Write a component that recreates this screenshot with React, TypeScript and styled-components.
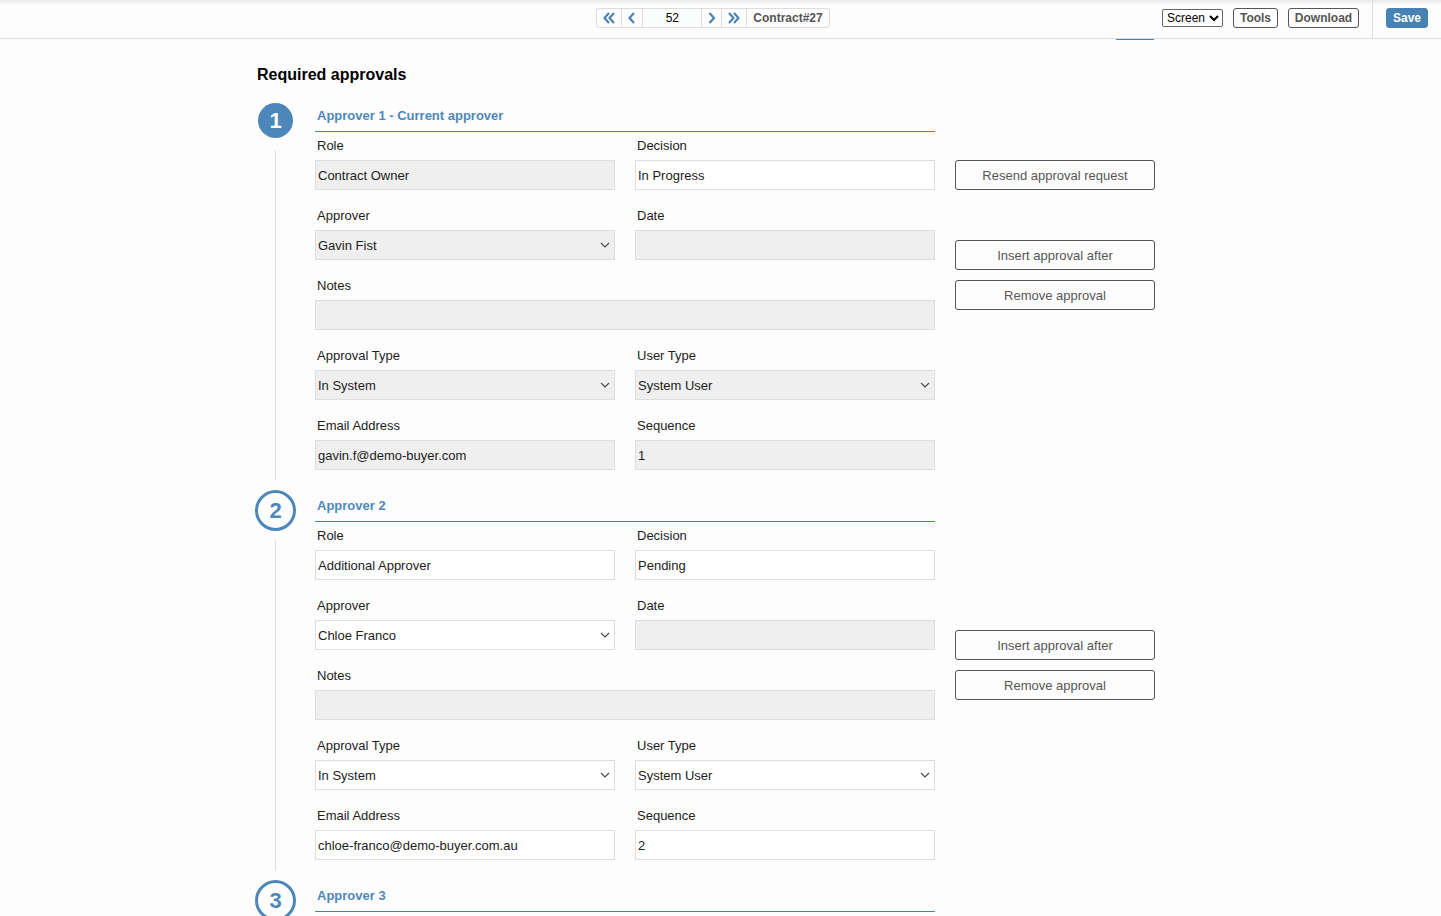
import React, { useId } from "react";
import styled, { createGlobalStyle, css } from "styled-components";

const blue = "#4682b4";
const softBlue = "#4d87ba";
const line = "#dddddd";
const ink = "#555555";

const GlobalStyle = createGlobalStyle`
  *, *::before, *::after { box-sizing: border-box; }
  body { margin: 0; background: #fdfdfd; }
  body, button, input, select {
    font-family: Arial, "Liberation Sans", sans-serif;
    font-size: 13px;
  }
`;

const Page = styled.div`
  display: flex;
  flex-direction: column;
  height: 100vh;
  overflow: hidden;
  color: #1c1c1c;
`;

const TopBar = styled.header`
  display: grid;
  grid-template-columns: 1fr auto 1fr;
  flex: none;
  height: 39px;
  border-bottom: 1px solid ${line};
  background: linear-gradient(#e8e8e8, #fdfdfd 5px);
`;

const Pager = styled.nav`
  grid-column: 2;
  display: flex;
  align-self: start;
  height: 20px;
  margin: 8px 15px 0 0;
  border: 1px solid ${line};
  border-radius: 3px;
`;

const PagerButton = styled.button<{ $width: number }>`
  display: flex;
  align-items: center;
  justify-content: center;
  width: ${(p) => p.$width}px;
  padding: 0;
  border: 0;
  border-right: 1px solid ${line};
  background: transparent;
  color: ${blue};
  cursor: pointer;
`;

const PageInput = styled.input`
  width: 59px;
  padding: 0;
  border: 0;
  border-right: 1px solid ${line};
  background: #fbfdfd;
  font-size: 12px;
  text-align: center;
  color: #000000;
`;

const PagerLabel = styled.span`
  padding: 0 6px;
  font-size: 12px;
  font-weight: bold;
  line-height: 18px;
  color: ${ink};
`;

const Actions = styled.div`
  display: flex;
  justify-content: flex-end;
  align-items: flex-start;
  gap: 10px;
  padding-right: 13px;
`;

const ScreenSelect = styled.select`
  width: 61px;
  height: 18px;
  margin-top: 9px;
  padding: 0;
  border: 1px solid #666666;
  border-radius: 2px;
  background: #ffffff;
  font-size: 12px;
  color: #000000;
`;

const BarButton = styled.button<{ $primary?: boolean; $width: number }>`
  width: ${(p) => p.$width}px;
  height: 20px;
  margin-top: 8px;
  padding: 0;
  border: 1px solid ${(p) => (p.$primary ? blue : ink)};
  border-radius: 3px;
  background: ${(p) => (p.$primary ? blue : "transparent")};
  color: ${(p) => (p.$primary ? "#ffffff" : ink)};
  font-size: 12px;
  font-weight: bold;
  line-height: 16px;
  cursor: pointer;
`;

const SaveArea = styled.div`
  height: 38px;
  margin-left: 3px;
  padding-left: 13px;
  border-left: 1px solid ${line};
`;

const Main = styled.main`
  flex: 1;
  min-height: 0;
  padding-right: 31px;
  overflow: hidden;
`;

const Content = styled.div`
  width: 100%;
  max-width: 900px;
  margin: 0 auto;
`;

const TabEdge = styled.div`
  width: 38px;
  height: 1px;
  margin: 0 1px 0 auto;
  background: ${blue};
`;

const Heading = styled.h1`
  height: 60px;
  margin: 0;
  padding: 25px 2px 0;
  font-size: 16px;
  line-height: 20px;
  color: #000000;
`;

const Section = styled.section`
  display: grid;
  grid-template-columns: 40px minmax(0, 620px) 200px;
  column-gap: 20px;
  min-height: 390px;
`;

const Rail = styled.div`
  display: flex;
  flex-direction: column;
  align-items: center;
  width: 41px;
`;

const BadgeSlot = styled.div`
  display: flex;
  align-items: center;
  justify-content: center;
  width: 41px;
  height: 41px;
  margin-bottom: 9px;
`;

const Badge = styled.div<{ $current: boolean }>`
  display: flex;
  align-items: center;
  justify-content: center;
  border-radius: 50%;
  font-size: 22px;
  font-weight: bold;
  line-height: 24px;
  ${(p) =>
    p.$current
      ? css`
          width: 35px;
          height: 35px;
          background: ${softBlue};
          color: #ffffff;
        `
      : css`
          width: 41px;
          height: 41px;
          border: 3px solid ${softBlue};
          color: ${softBlue};
        `}
`;

const RailLine = styled.div`
  flex: 1;
  width: 1px;
  margin-bottom: 10px;
  background: ${line};
`;

const SectionTitle = styled.h2`
  height: 32px;
  margin: 0;
  padding: 0 2px;
  border-bottom: 1px solid ${blue};
  font-size: 13px;
  line-height: 31px;
  color: ${softBlue};
`;

const Fields = styled.div`
  display: grid;
  grid-template-columns: 1fr 1fr;
  gap: 12px 20px;
`;

const FieldBox = styled.div<{ $wide?: boolean }>`
  display: flex;
  flex-direction: column;
  grid-column: ${(p) => (p.$wide ? "1 / -1" : "auto")};
`;

const Label = styled.label`
  height: 28px;
  padding: 0 2px;
  line-height: 28px;
`;

const control = css<{ $grey?: boolean }>`
  width: 100%;
  height: 30px;
  margin: 0;
  padding: 0 2px;
  border: 1px solid ${line};
  border-radius: 0;
  outline: none;
  background: ${(p) => (p.$grey ? "#efefef" : "#ffffff")};
  color: #1c1c1c;
`;

const TextInput = styled.input`
  ${control}
`;

const SelectWrap = styled.div`
  position: relative;
`;

const SelectInput = styled.select`
  ${control}
  display: block;
  appearance: none;
`;

const Chevron = styled.svg`
  position: absolute;
  top: 12px;
  right: 5px;
  pointer-events: none;
`;

const Side = styled.div`
  display: flex;
  flex-direction: column;
  gap: 10px;
  padding-top: 60px;
`;

const ResendSlot = styled.div`
  height: 70px;
`;

const SideButton = styled.button`
  width: 200px;
  height: 30px;
  padding: 0;
  border: 1px solid ${ink};
  border-radius: 3px;
  background: transparent;
  color: ${ink};
  cursor: pointer;
`;

type FieldData = {
  label: string;
  value: string;
  grey?: boolean;
  select?: boolean;
  wide?: boolean;
};

type Approver = {
  title: string;
  current?: boolean;
  resend?: boolean;
  fields: FieldData[];
};

const approvers: Approver[] = [
  {
    title: "Approver 1 - Current approver",
    current: true,
    resend: true,
    fields: [
      { label: "Role", value: "Contract Owner", grey: true },
      { label: "Decision", value: "In Progress" },
      { label: "Approver", value: "Gavin Fist", grey: true, select: true },
      { label: "Date", value: "", grey: true },
      { label: "Notes", value: "", grey: true, wide: true },
      { label: "Approval Type", value: "In System", grey: true, select: true },
      { label: "User Type", value: "System User", grey: true, select: true },
      { label: "Email Address", value: "gavin.f@demo-buyer.com", grey: true },
      { label: "Sequence", value: "1", grey: true },
    ],
  },
  {
    title: "Approver 2",
    fields: [
      { label: "Role", value: "Additional Approver" },
      { label: "Decision", value: "Pending" },
      { label: "Approver", value: "Chloe Franco", select: true },
      { label: "Date", value: "", grey: true },
      { label: "Notes", value: "", grey: true, wide: true },
      { label: "Approval Type", value: "In System", select: true },
      { label: "User Type", value: "System User", select: true },
      { label: "Email Address", value: "chloe-franco@demo-buyer.com.au" },
      { label: "Sequence", value: "2" },
    ],
  },
  { title: "Approver 3", fields: [] },
];

function Field({ label, value, grey, select, wide }: FieldData) {
  const id = useId();
  return (
    <FieldBox $wide={wide}>
      <Label htmlFor={id}>{label}</Label>
      {select ? (
        <SelectWrap>
          <SelectInput id={id} $grey={grey} defaultValue={value}>
            <option>{value}</option>
          </SelectInput>
          <Chevron width="10" height="6" viewBox="0 0 10 6" aria-hidden="true">
            <path d="M1 1l4 4 4-4" fill="none" stroke="#444444" strokeWidth="1.1" />
          </Chevron>
        </SelectWrap>
      ) : (
        <TextInput id={id} $grey={grey} readOnly={grey} defaultValue={value} />
      )}
    </FieldBox>
  );
}

function Arrow({ double, right }: { double?: boolean; right?: boolean }) {
  const shape = right
    ? double
      ? "M1 1l4.5 5L1 11M6 1l4.500 5L6 11"
      : "M1.500 1l4.500 5-4.500 5"
    : double
      ? "M6 1L1.500 6 6 11M11 1L6.500 6l4.500 5"
      : "M6 1L1.500 6 6 11";
  const width = double ? 12 : 8;
  return (
    <svg width={width} height="12" viewBox={`0 0 ${width} 12`} aria-hidden="true">
      <path d={shape} fill="none" stroke="currentColor" strokeWidth="2.1" />
    </svg>
  );
}

export default function App() {
  return (
    <Page>
      <GlobalStyle />
      <TopBar>
        <Pager aria-label="Records">
          <PagerButton $width={25} aria-label="First"><Arrow double /></PagerButton>
          <PagerButton $width={21} aria-label="Previous"><Arrow /></PagerButton>
          <PageInput aria-label="Record number" defaultValue="52" />
          <PagerButton $width={20} aria-label="Next"><Arrow right /></PagerButton>
          <PagerButton $width={25} aria-label="Last"><Arrow double right /></PagerButton>
          <PagerLabel>Contract#27</PagerLabel>
        </Pager>
        <Actions>
          <ScreenSelect aria-label="View" defaultValue="Screen">
            <option>Screen</option>
          </ScreenSelect>
          <BarButton $width={45}>Tools</BarButton>
          <BarButton $width={71}>Download</BarButton>
          <SaveArea>
            <BarButton $primary $width={42}>Save</BarButton>
          </SaveArea>
        </Actions>
      </TopBar>
      <Main>
        <Content>
          <TabEdge />
          <Heading>Required approvals</Heading>
          {approvers.map((approver, index) => (
            <Section key={approver.title}>
              <Rail>
                <BadgeSlot>
                  <Badge $current={!!approver.current}>{index + 1}</Badge>
                </BadgeSlot>
                <RailLine />
              </Rail>
              <div>
                <SectionTitle>{approver.title}</SectionTitle>
                <Fields>
                  {approver.fields.map((field) => (
                    <Field key={field.label} {...field} />
                  ))}
                </Fields>
              </div>
              {approver.fields.length > 0 && (
                <Side>
                  <ResendSlot>
                    {approver.resend && <SideButton>Resend approval request</SideButton>}
                  </ResendSlot>
                  <SideButton>Insert approval after</SideButton>
                  <SideButton>Remove approval</SideButton>
                </Side>
              )}
            </Section>
          ))}
        </Content>
      </Main>
    </Page>
  );
}
